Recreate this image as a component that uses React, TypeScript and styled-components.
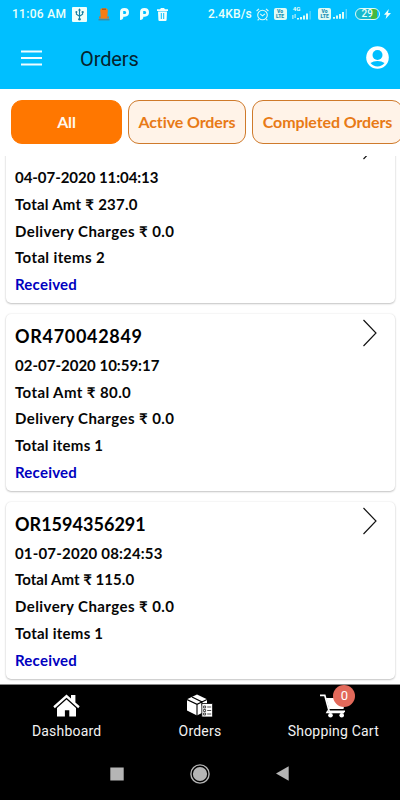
import React from 'react';
import styled, { createGlobalStyle } from 'styled-components';

const GlobalStyle = createGlobalStyle`
  * { box-sizing: border-box; }
  body { margin: 0; background: #fff; }
  svg { display: block; flex: none; }
  button { margin: 0; border: 0; background: none; padding: 0; font: inherit; color: inherit; }
`;

const Screen = styled.div`
  width: 400px;
  height: 800px;
  overflow: hidden;
  display: flex;
  flex-direction: column;
  background: #fff;
  font-family: Lato, 'Noto Sans', sans-serif;
`;

const Header = styled.header`
  height: 89px;
  flex: none;
  background: #00bfff;
  color: #eafff9;
  font-family: Roboto, sans-serif;
`;

const StatusBar = styled.div`
  height: 28px;
  display: flex;
  align-items: center;
  justify-content: space-between;
  padding: 0 9px 0 12px;
`;

const StatusGroup = styled.div<{ $gap: number }>`
  display: flex;
  align-items: center;
  gap: ${p => p.$gap}px;
`;

const StatusText = styled.span<{ $spacing: number }>`
  font-size: 12px;
  line-height: 16px;
  font-weight: 500;
  letter-spacing: ${p => p.$spacing}px;
`;

const TitleBar = styled.div`
  height: 61px;
  display: flex;
  align-items: center;
  padding: 0 11px 2px 21px;
`;

const PageTitle = styled.h1`
  flex: 1;
  margin: 2px 0 0 38px;
  font-size: 20px;
  line-height: 24px;
  font-weight: 400;
  letter-spacing: -0.1px;
  color: #06232e;
`;

const Tabs = styled.nav`
  height: 67px;
  flex: none;
  display: flex;
  gap: 6px;
  padding: 11px 0 0 11px;
`;

const Tab = styled.button<{ $width: number; $active?: boolean }>`
  && {
    flex: none;
    width: ${p => p.$width}px;
    height: 44px;
    padding-bottom: 2px;
    border: 1px solid ${p => (p.$active ? '#ff7700' : '#cf7a2b')};
    border-radius: 11px;
    background: ${p => (p.$active ? '#ff7700' : '#fff3e8')};
    color: ${p => (p.$active ? '#fff6ec' : '#e87a16')};
    font-size: 16px;
    font-weight: 700;
    letter-spacing: -0.1px;
    white-space: nowrap;
  }
`;

const OrderList = styled.main`
  flex: 1;
  min-height: 0;
  overflow: hidden;
  display: flex;
  flex-direction: column;
  gap: 11px;
  padding: 0 5.5px;
`;

const Card = styled.article<{ $scrolled?: boolean }>`
  flex: none;
  height: 176.75px;
  margin-top: ${p => (p.$scrolled ? -29.5 : 0)}px;
  display: flex;
  justify-content: space-between;
  padding: 8.6px 17.5px 0 9.5px;
  border-radius: 5px;
  background: #fff;
  box-shadow: 0 1px 2px rgba(0, 0, 0, 0.22), 0 0 2px rgba(0, 0, 0, 0.1);
`;

const Details = styled.div`
  display: flex;
  flex-direction: column;
`;

const OrderId = styled.h2<{ $spacing: number }>`
  margin: 0 0 2px;
  font-size: 18px;
  line-height: 27px;
  font-weight: 700;
  letter-spacing: ${p => p.$spacing}px;
  color: #000;
`;

const Line = styled.div<{ $spacing: number; $status?: boolean }>`
  height: 26.75px;
  line-height: 26.75px;
  font-size: 15px;
  font-weight: 700;
  white-space: pre;
  letter-spacing: ${p => p.$spacing}px;
  color: ${p => (p.$status ? '#0000c0' : '#060606')};
`;

const ArrowSlot = styled.div`
  margin-top: -3.6px;
`;

const BottomNav = styled.nav`
  height: 63px;
  flex: none;
  display: grid;
  grid-template-columns: repeat(3, 1fr);
  border-top: 1px solid #8a8a8a;
  background: #000;
  color: #fff;
  font-family: Roboto, sans-serif;
`;

const NavItem = styled.button`
  && {
    display: flex;
    flex-direction: column;
    align-items: center;
    justify-content: flex-start;
    padding-top: 9px;
    gap: 3px;
  }
`;

const NavIcon = styled.span`
  position: relative;
  display: block;
  height: 26px;
`;

const NavLabel = styled.span`
  font-size: 14px;
  line-height: 16px;
  letter-spacing: 0.2px;
  color: #f2f2f2;
`;

const Badge = styled.span`
  position: absolute;
  left: 13px;
  top: -9px;
  width: 22px;
  height: 22px;
  border-radius: 50%;
  background: #e2695a;
  color: #fff;
  font-size: 13px;
  line-height: 22px;
  text-align: center;
`;

const SystemNav = styled.div`
  height: 53px;
  flex: none;
  display: grid;
  grid-template-columns: 14px 20px 13px;
  column-gap: 66px;
  justify-content: center;
  align-items: center;
  padding-right: 2px;
  background: #000;
`;

const UsbIcon = () => (
  <svg width="15" height="15" viewBox="0 0 15 15">
    <rect width="15" height="15" rx="1" fill="#effffb" />
    <g stroke="#187fa0" fill="none" strokeWidth="1.1">
      <path d="M7.5 3v9M4.4 5v2.2l3.1 2M10.6 5v2.2l-3.1 2" />
    </g>
    <path d="M7.5 1.3l1.5 2.2H6z" fill="#187fa0" />
    <circle cx="7.5" cy="12.2" r="1.3" fill="#187fa0" />
    <circle cx="4.4" cy="5" r="1" fill="#187fa0" />
    <rect x="9.7" y="4.1" width="1.9" height="1.9" fill="#187fa0" />
  </svg>
);

const FigureIcon = () => (
  <svg width="12" height="13" viewBox="0 0 12 13">
    <path d="M2.2 2.4Q2.4 0 6 0t3.8 2.4L9.4 8H2.6z" fill="#f57c14" />
    <path d="M1 8.4h10v2.2H1z" fill="#c17a3f" />
    <path d="M3 7h6v3.5H3z" fill="#f57c14" />
    <path d="M4 .7h4v1H4z" fill="#80552c" />
    <path d="M.5 11.3h11v1H.5z" fill="#59737a" />
  </svg>
);

const ParkIcon = () => (
  <svg width="9" height="12" viewBox="0 0 9 12">
    <path
      d="M0 12V4.2Q0 0 4.5 0T9 4.3 4.8 8.7H3.4Q3.2 12 0 12zM3.2 3v3h1.5a1.5 1.5 0 0 0 0-3z"
      fill="#f2fffc"
      fillRule="evenodd"
    />
  </svg>
);

const TrashIcon = () => (
  <svg width="11" height="13" viewBox="0 0 11 13">
    <path d="M0 1.3h3L4 0h3l1 1.3h3v1.6H0z" fill="#f2fffc" />
    <path d="M1 3.6h9l-.4 8.3q-.1 1.1-1 1.1H2.4q-.9 0-1-1.1zM3.8 5v6h1V5zM6.2 5v6h1V5z" fill="#f2fffc" fillRule="evenodd" />
  </svg>
);

const TrashSlot = styled.span`
  margin-left: -2px;
`;

const AlarmIcon = () => (
  <svg width="13" height="13" viewBox="0 0 13 13" fill="none" stroke="#dffbf5" strokeWidth="1.1">
    <circle cx="6.5" cy="7" r="4.8" />
    <path d="M4.2 5.8l2.3 2 2.4-2M.6 3L3 .8M12.4 3L10 .8M2.7 11l-1 1.3M10.3 11l1 1.3" />
  </svg>
);

const LteBox = styled.span`
  width: 13px;
  height: 12px;
  border-radius: 2px;
  display: flex;
  flex-direction: column;
  justify-content: center;
  background: #dffbf5;
  color: #1790b4;
  font-size: 5px;
  line-height: 5px;
  font-weight: 900;
  text-align: center;
`;

const Volte = () => (
  <LteBox>
    <span>Vo</span>
    <span>LTE</span>
  </LteBox>
);

const SignalBox = styled.span`
  display: flex;
  flex-direction: column;
  width: 20px;
  margin: -2px 2px 0 1px;
  font-size: 6px;
  line-height: 5px;
  font-weight: 700;
`;

const NetworkLabel = styled.span`
  padding-left: 1px;
`;

const Signal4g = () => (
  <SignalBox>
    <NetworkLabel>4G</NetworkLabel>
    <svg width="20" height="9" viewBox="0 0 20 9" fill="#dffbf5">
      <path d="M.4 4h1v4h-1zM2.6 3h1v4h-1zM5 7h2v1.5H5zM8 6h2v2.5H8zM11 4.5h2v4h-2zM14 2.5h2v6h-2z" />
      <path d="M17.5 0h1.3v8.5h-1.3z" opacity=".4" />
    </svg>
  </SignalBox>
);

const SignalWrap = styled.span`
  margin: 0 2px 0 -2px;
`;

const Signal = () => (
  <SignalWrap>
    <svg width="15" height="10" viewBox="0 0 15 10" fill="#dffbf5">
      <path d="M0 8h2v1.8H0zM3 6.6h2v3.2H3zM6 5h2v4.8H6zM9 3h2v6.8H9z" />
      <path d="M12.6 0h1.4v9.8h-1.4z" opacity=".4" />
    </svg>
  </SignalWrap>
);

const BatteryPill = styled.span`
  width: 25px;
  height: 12px;
  border: 1px solid #dffbf5;
  border-radius: 6px;
  background: linear-gradient(90deg, #16b9cf 0 66%, #45b83e 66% 92%, #00bfff 92%);
  font-size: 10px;
  line-height: 10px;
  font-weight: 500;
  text-align: center;
`;

const BoltIcon = () => (
  <svg width="7" height="10" viewBox="0 0 7 10">
    <path d="M4.8 0L0 5.7h2.6L1.6 10 7 4.1H4z" fill="#effffb" />
  </svg>
);

const MenuIcon = () => (
  <svg width="21" height="16" viewBox="0 0 21 16">
    <path d="M0 1.5h21M0 8h21M0 14.5h21" stroke="#effcff" strokeWidth="2" />
  </svg>
);

const ProfileIcon = () => (
  <svg width="23" height="23" viewBox="0 0 23 23">
    <circle cx="11.5" cy="11.5" r="11.3" fill="#fff" />
    <circle cx="11.5" cy="9" r="5" fill="#00bfff" />
    <path d="M4.5 17.1q2.8-2 7-2t7 2a9 9 0 0 1-14 0z" fill="#00bfff" />
  </svg>
);

const Chevron = () => (
  <svg width="15" height="28" viewBox="0 0 15 28">
    <path d="M1.5 1l12.5 13L1.5 27" fill="none" stroke="#111" strokeWidth="1.15" />
  </svg>
);

const HomeIcon = () => (
  <svg width="27" height="24" viewBox="0 0 27 24" fill="#fff">
    <path d="M13.5.5L18 4.6V1h4.4v7.5l4.3 3.8-1.5 2L13.5 3.8 1.8 14.3l-1.5-2z" />
    <path d="M13.5 5.4l9.5 8.7v8.4h-6.7v-6.3h-4.4v6.3H4v-8.4z" />
  </svg>
);

const OrdersIcon = () => (
  <svg width="26" height="24" viewBox="0 0 26 24">
    <path d="M0 5.3L10 .5l10 4.7v11L10 21.5 0 16.5z" fill="#fff" />
    <path d="M0 5.6l10 4.7 10-4.7M10 10.3V22M5 2.9l10 5v3.6" fill="none" stroke="#000" strokeWidth="1.1" />
    <path d="M14.8 9.5h10.8v13.5H14.8z" fill="#fff" stroke="#000" strokeWidth=".8" />
    <path
      d="M16.6 12h2v2h-2zM16.6 15.5h2v2h-2zM16.6 19h2v2h-2zM20.2 13h4M20.2 16.5h4M20.2 20h4"
      fill="none"
      stroke="#222"
      strokeWidth=".8"
    />
  </svg>
);

const CartIcon = () => (
  <svg width="26" height="24" viewBox="0 0 26 24">
    <path d="M0 1.3h4.8l4.4 16H25" fill="none" stroke="#fff" strokeWidth="1.7" />
    <path d="M6 4h19.5l-2 11H9.2z" fill="#fff" />
    <path d="M8 16.5l-1 2h17" fill="none" stroke="#fff" strokeWidth="1.6" />
    <circle cx="10.5" cy="21.3" r="2.3" fill="#fff" />
    <circle cx="21.7" cy="21.3" r="2.3" fill="#fff" />
  </svg>
);

const SquareIcon = () => (
  <svg width="14" height="14" viewBox="0 0 14 14">
    <rect x=".3" y=".5" width="13.4" height="13" fill="#b5b5b5" />
  </svg>
);

const CircleIcon = () => (
  <svg width="20" height="20" viewBox="0 0 20 20">
    <circle cx="10" cy="10" r="9.1" fill="none" stroke="#b5b5b5" strokeWidth="1.4" />
    <circle cx="10" cy="10" r="7.1" fill="#b5b5b5" />
  </svg>
);

const BackIcon = () => (
  <svg width="13" height="15" viewBox="0 0 13 15">
    <path d="M12.7.3v14.4L0 7.5z" fill="#b5b5b5" />
  </svg>
);

type Entry = { text: string; spacing: number };
type Order = { id: Entry; lines: Entry[] };

const delivery: Entry = { text: 'Delivery Charges ₹ 0.0', spacing: 0.42 };

const orders: Order[] = [
  {
    id: { text: 'OR470051324', spacing: 0.6 },
    lines: [
      { text: '04-07-2020 11:04:13', spacing: -0.05 },
      { text: 'Total Amt ₹ 237.0', spacing: 0.25 },
      delivery,
      { text: 'Total items 2', spacing: 0.38 },
    ],
  },
  {
    id: { text: 'OR470042849', spacing: 0.69 },
    lines: [
      { text: '02-07-2020 10:59:17', spacing: 0 },
      { text: 'Total Amt ₹ 80.0', spacing: 0.4 },
      delivery,
      { text: 'Total items 1', spacing: 0.25 },
    ],
  },
  {
    id: { text: 'OR1594356291', spacing: 0.02 },
    lines: [
      { text: '01-07-2020 08:24:53', spacing: 0.17 },
      { text: 'Total Amt ₹ 115.0', spacing: 0.04 },
      delivery,
      { text: 'Total items 1', spacing: 0.25 },
    ],
  },
];

export default function App() {
  return (
    <Screen>
      <GlobalStyle />
      <Header>
        <StatusBar>
          <StatusGroup $gap={6}>
            <StatusText $spacing={0.3}>11:06 AM</StatusText>
            <StatusGroup $gap={10.5}>
              <UsbIcon />
              <FigureIcon />
              <ParkIcon />
              <ParkIcon />
              <TrashSlot><TrashIcon /></TrashSlot>
            </StatusGroup>
          </StatusGroup>
          <StatusGroup $gap={4.3}>
            <StatusText $spacing={0.15}>2.4KB/s</StatusText>
            <AlarmIcon />
            <Volte />
            <Signal4g />
            <Volte />
            <Signal />
            <BatteryPill>29</BatteryPill>
            <BoltIcon />
          </StatusGroup>
        </StatusBar>
        <TitleBar>
          <MenuIcon />
          <PageTitle>Orders</PageTitle>
          <ProfileIcon />
        </TitleBar>
      </Header>
      <Tabs>
        <Tab $width={111} $active>All</Tab>
        <Tab $width={118}>Active Orders</Tab>
        <Tab $width={151}>Completed Orders</Tab>
      </Tabs>
      <OrderList>
        {orders.map((order, i) => (
          <Card key={order.id.text} $scrolled={i === 0}>
            <Details>
              <OrderId $spacing={order.id.spacing}>{order.id.text}</OrderId>
              {order.lines.map(line => (
                <Line key={line.text} $spacing={line.spacing}>{line.text}</Line>
              ))}
              <Line $spacing={0.22} $status>Received</Line>
            </Details>
            <ArrowSlot>
              <Chevron />
            </ArrowSlot>
          </Card>
        ))}
      </OrderList>
      <BottomNav>
        <NavItem>
          <NavIcon><HomeIcon /></NavIcon>
          <NavLabel>Dashboard</NavLabel>
        </NavItem>
        <NavItem>
          <NavIcon><OrdersIcon /></NavIcon>
          <NavLabel>Orders</NavLabel>
        </NavItem>
        <NavItem>
          <NavIcon>
            <CartIcon />
            <Badge>0</Badge>
          </NavIcon>
          <NavLabel>Shopping Cart</NavLabel>
        </NavItem>
      </BottomNav>
      <SystemNav>
        <SquareIcon />
        <CircleIcon />
        <BackIcon />
      </SystemNav>
    </Screen>
  );
}
